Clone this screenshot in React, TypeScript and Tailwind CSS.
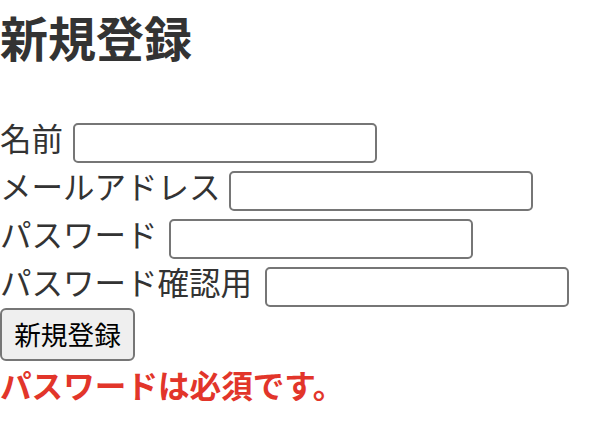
const fields = [
  { label: "名前", labelW: "w-[73px]", type: "text" },
  { label: "メールアドレス", labelW: "w-[229px]", type: "email" },
  { label: "パスワード", labelW: "w-[169px]", type: "password" },
  { label: "パスワード確認用", labelW: "w-[265px]", type: "password" },
];

export default function App() {
  return (
    <div className="w-[614px] h-[436px] bg-white text-[#333] font-['Noto_Sans_CJK_JP',sans-serif] overflow-hidden">
      <h2 className="pt-[12px] text-[48px] leading-[48px] font-bold whitespace-nowrap">新規登録</h2>

      <form className="mt-[63px]" onSubmit={e => e.preventDefault()}>
        <div className="flex flex-col gap-[8px]">
          {fields.map(f => (
            <div key={f.label} className="flex items-start h-[40px]">
              <label className={`${f.labelW} shrink-0 text-[31.5px] leading-[28px] whitespace-nowrap`}>{f.label}</label>
              <input
                type={f.type}
                className="w-[304px] h-[40px] border-2 border-[#767676] rounded-[5px] bg-white px-2 text-[26px] outline-none"
              />
            </div>
          ))}
        </div>
        <button
          type="submit"
          className="mt-px w-[135px] h-[53px] flex items-center justify-center border-2 border-[#767676] rounded-[6px] bg-[#efefef] text-black text-[26.67px] leading-none"
        >
          新規登録
        </button>
      </form>

      <p className="mt-[3px] text-[31.6px] leading-[40px] font-bold text-[#e2352a] whitespace-nowrap">パスワードは必須です。</p>
    </div>
  );
}
